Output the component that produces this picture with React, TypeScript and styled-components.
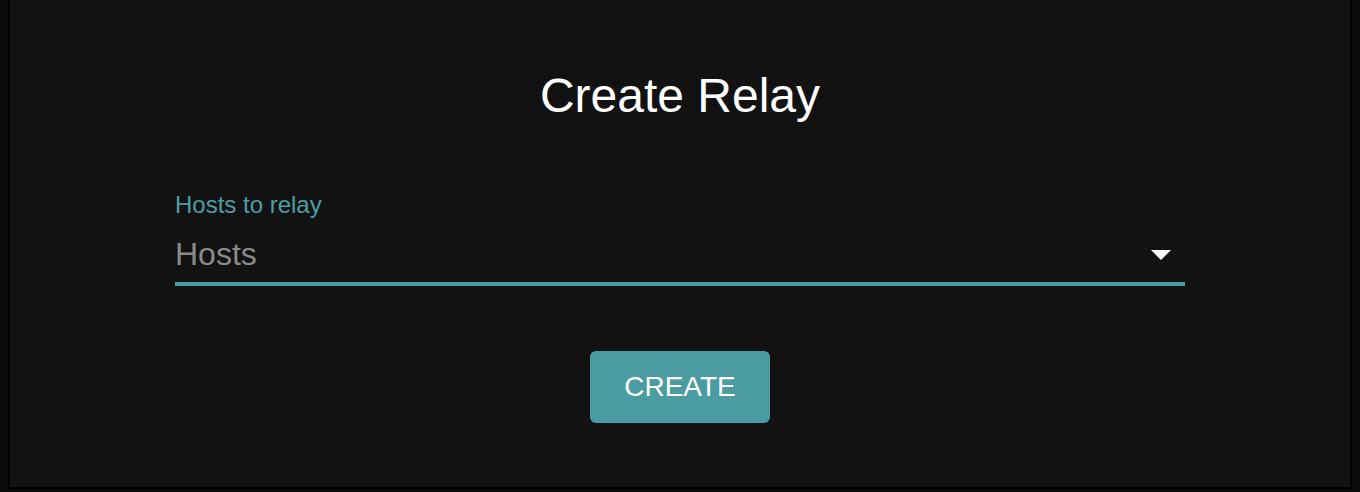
import React from "react";
import styled, { createGlobalStyle } from "styled-components";

const Global = createGlobalStyle`
  html, body {
    margin: 0;
    padding: 0;
    background: #0b0b0b;
  }
  body {
    padding: 0 8px;
    font-family: "Liberation Sans", Arial, sans-serif;
  }
`;

const Panel = styled.div`
  box-sizing: border-box;
  height: 489px;
  border: 2px solid #000;
  border-top: none;
  background: #121212;
  display: flex;
  flex-direction: column;
  align-items: center;
  padding-top: 68px;
`;

const Title = styled.h1`
  margin: 0;
  font-size: 48px;
  line-height: 56px;
  font-weight: 400;
  color: #ffffff;
`;

const Field = styled.div`
  width: 1010px;
  margin-top: 69px;
  display: flex;
  flex-direction: column;
`;

const Label = styled.label`
  font-size: 24px;
  line-height: 24px;
  color: #4d9fa6;
`;

const SelectRow = styled.div`
  margin-top: 15px;
  height: 40px;
  padding-bottom: 10px;
  border-bottom: 4px solid #4a9ba2;
  display: flex;
  align-items: center;
  justify-content: space-between;
`;

const Placeholder = styled.span`
  font-size: 32px;
  line-height: 40px;
  padding-top: 3px;
  color: #8a8a8a;
`;

const Arrow = styled.svg`
  width: 20px;
  height: 10px;
  margin-right: 14px;
  margin-top: 6px;
`;

const Button = styled.button`
  margin-top: 65px;
  width: 180px;
  height: 72px;
  border: none;
  border-radius: 6px;
  background: #4a9ba2;
  color: #ffffff;
  font-family: "Liberation Sans", Arial, sans-serif;
  font-size: 28px;
  line-height: 72px;
  padding: 0;
  cursor: pointer;
`;

export default function App() {
  return (
    <>
      <Global />
      <Panel>
        <Title>Create Relay</Title>
        <Field>
          <Label>Hosts to relay</Label>
          <SelectRow>
            <Placeholder>Hosts</Placeholder>
            <Arrow viewBox="0 0 20 10">
              <polygon points="0,0 20,0 10,10" fill="#ffffff" />
            </Arrow>
          </SelectRow>
        </Field>
        <Button>CREATE</Button>
      </Panel>
    </>
  );
}
